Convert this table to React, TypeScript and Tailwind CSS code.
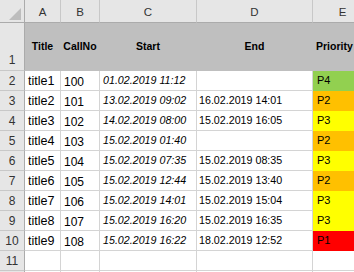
import React from "react";

type Row = {
  n: number;
  title: string;
  call: string;
  start: string;
  end: string;
  p: string;
  color: string;
};

const rows: Row[] = [
  { n: 2, title: "title1", call: "100", start: "01.02.2019 11:12", end: "", p: "P4", color: "bg-[#92d050] border-[#92d050]" },
  { n: 3, title: "title2", call: "101", start: "13.02.2019 09:02", end: "16.02.2019 14:01", p: "P2", color: "bg-[#ffc000] border-[#ffc000]" },
  { n: 4, title: "title3", call: "102", start: "14.02.2019 08:00", end: "15.02.2019 16:05", p: "P3", color: "bg-[#ffff00] border-[#ffff00]" },
  { n: 5, title: "title4", call: "103", start: "15.02.2019 01:40", end: "", p: "P2", color: "bg-[#ffc000] border-[#ffc000]" },
  { n: 6, title: "title5", call: "104", start: "15.02.2019 07:35", end: "15.02.2019 08:35", p: "P3", color: "bg-[#ffff00] border-[#ffff00]" },
  { n: 7, title: "title6", call: "105", start: "15.02.2019 12:44", end: "15.02.2019 13:40", p: "P2", color: "bg-[#ffc000] border-[#ffc000]" },
  { n: 8, title: "title7", call: "106", start: "15.02.2019 14:01", end: "15.02.2019 15:04", p: "P3", color: "bg-[#ffff00] border-[#ffff00]" },
  { n: 9, title: "title8", call: "107", start: "15.02.2019 16:20", end: "15.02.2019 16:35", p: "P3", color: "bg-[#ffff00] border-[#ffff00]" },
  { n: 10, title: "title9", call: "108", start: "15.02.2019 16:22", end: "18.02.2019 12:52", p: "P1", color: "bg-[#ff0000] border-[#ff0000]" },
];

const font = { fontFamily: '"Liberation Sans", Arial, sans-serif' };

const rowHead =
  "flex items-end justify-center pb-[3px] bg-[#e6e6e6] border-r border-r-[#ababab] border-b border-b-[#c8c8c8] text-[12px] leading-none text-[#333]";
const colHead =
  "flex items-end justify-center pb-[4px] bg-[#e6e6e6] border-r border-r-[#c8c8c8] border-b border-b-[#ababab] text-[11.5px] leading-none text-[#333]";
const cell = "flex items-end bg-white border-r border-b border-[#d4d4d4] leading-none text-black overflow-visible whitespace-nowrap";
const hdr = "flex items-center justify-center bg-[#bfbfbf] border-r border-b border-[#bfbfbf] font-bold text-[10.5px] leading-none text-black whitespace-nowrap";

export default function App() {
  return (
    <div className="w-[354px] h-[272px] overflow-hidden bg-white" style={font}>
      <div className="grid grid-cols-[25px_36px_39px_97px_116px_60px] grid-rows-[23px_48px_repeat(11,20px)]">
        {/* column headers */}
        <div className="relative bg-[#e6e6e6] border-r border-r-[#ababab] border-b border-b-[#ababab]">
          <svg className="absolute left-0 top-0" width="24" height="22" viewBox="0 0 24 22">
            <polygon points="21,8 21,20 9,20" fill="#bdbdbd" />
          </svg>
        </div>
        <div className={colHead}>A</div>
        <div className={colHead}>B</div>
        <div className={colHead}>C</div>
        <div className={colHead}>D</div>
        <div className={colHead}>E</div>

        {/* row 1 */}
        <div className={rowHead + " pb-[4px]"}>1</div>
        <div className={hdr}>Title</div>
        <div className={hdr}>CallNo</div>
        <div className={hdr}>Start</div>
        <div className={hdr}>End</div>
        <div className={hdr + " justify-start pl-[3px]"}>Priority</div>

        {rows.map((r) => (
          <React.Fragment key={r.n}>
            <div className={rowHead}>{r.n}</div>
            <div className={cell + " pl-[3px] pb-[3px] text-[12.5px]"}>{r.title}</div>
            <div className={cell + " pl-[3px] pb-[2px] text-[12px]"}>{r.call}</div>
            <div className={cell + " pl-[3px] pb-[4px] text-[10.7px] italic"}>{r.start}</div>
            <div className={cell + " pl-[2px] pb-[4px] text-[10.7px]"}>{r.end}</div>
            <div className={`flex items-end border-b pl-[4px] pb-[4px] text-[11px] leading-none text-black ${r.color}`}>{r.p}</div>
          </React.Fragment>
        ))}

        {/* row 11 */}
        <div className={rowHead}>11</div>
        <div className={cell}></div>
        <div className={cell}></div>
        <div className={cell}></div>
        <div className={cell}></div>
        <div className={cell}></div>

        {/* row 12 partial */}
        <div className={rowHead}></div>
        <div className={cell}></div>
        <div className={cell}></div>
        <div className={cell}></div>
        <div className={cell}></div>
        <div className={cell}></div>
      </div>
    </div>
  );
}
